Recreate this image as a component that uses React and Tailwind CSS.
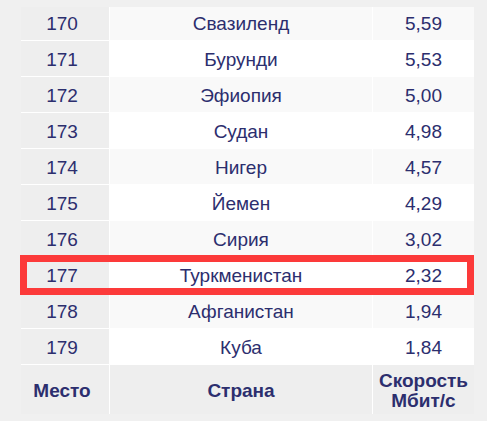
const rows = [
  ["170", "Свазиленд", "5,59"],
  ["171", "Бурунди", "5,53"],
  ["172", "Эфиопия", "5,00"],
  ["173", "Судан", "4,98"],
  ["174", "Нигер", "4,57"],
  ["175", "Йемен", "4,29"],
  ["176", "Сирия", "3,02"],
  ["177", "Туркменистан", "2,32"],
  ["178", "Афганистан", "1,94"],
  ["179", "Куба", "1,84"],
];

export default function App() {
  return (
    <div
      className="w-[487px] h-[421px] bg-[#f0f0f0] overflow-hidden text-[#2c2e6e] text-[19px]"
      style={{ fontFamily: '"Liberation Sans", Arial, sans-serif' }}
    >
      <div className="relative mt-[7px] ml-[21px] w-[453px] overflow-hidden">
        <div className="-mt-[2px] flex flex-col gap-y-px bg-white">
          {rows.map(([place, country, speed], i) => {
            const striped = i % 2 === 0;
            return (
              <div key={place} className="grid grid-cols-[88px_262px_101px] gap-x-px h-[35px] leading-none">
                <div className="bg-[#eeeeee] flex items-center justify-center pr-[6px] pt-[2px]">{place}</div>
                <div className={`flex items-center justify-center pt-[2px] ${striped ? "bg-[#f9f9f9]" : "bg-white"}`}>
                  {country}
                </div>
                <div className={`flex items-center justify-center pt-[2px] ${striped ? "bg-[#f9f9f9]" : "bg-white"}`}>
                  {speed}
                </div>
              </div>
            );
          })}
          <div className="grid grid-cols-[88px_262px_101px] gap-x-px h-[49px] font-bold leading-[20px]">
            <div className="bg-[#eeeeee] flex items-center justify-center pr-[6px] pt-[2px]">Место</div>
            <div className="bg-[#eeeeee] flex items-center justify-center pt-[2px]">Страна</div>
            <div className="bg-[#eeeeee] flex flex-col items-center justify-center text-center pt-[2px]">
              <span>Скорость</span>
              <span>Мбит/с</span>
            </div>
          </div>
        </div>
      </div>
      {/* highlight around Turkmenistan */}
      <div className="absolute left-[20px] top-[255px] w-[454px] h-[40px] border-[7px] border-[#fc3a3a]" />
    </div>
  );
}
